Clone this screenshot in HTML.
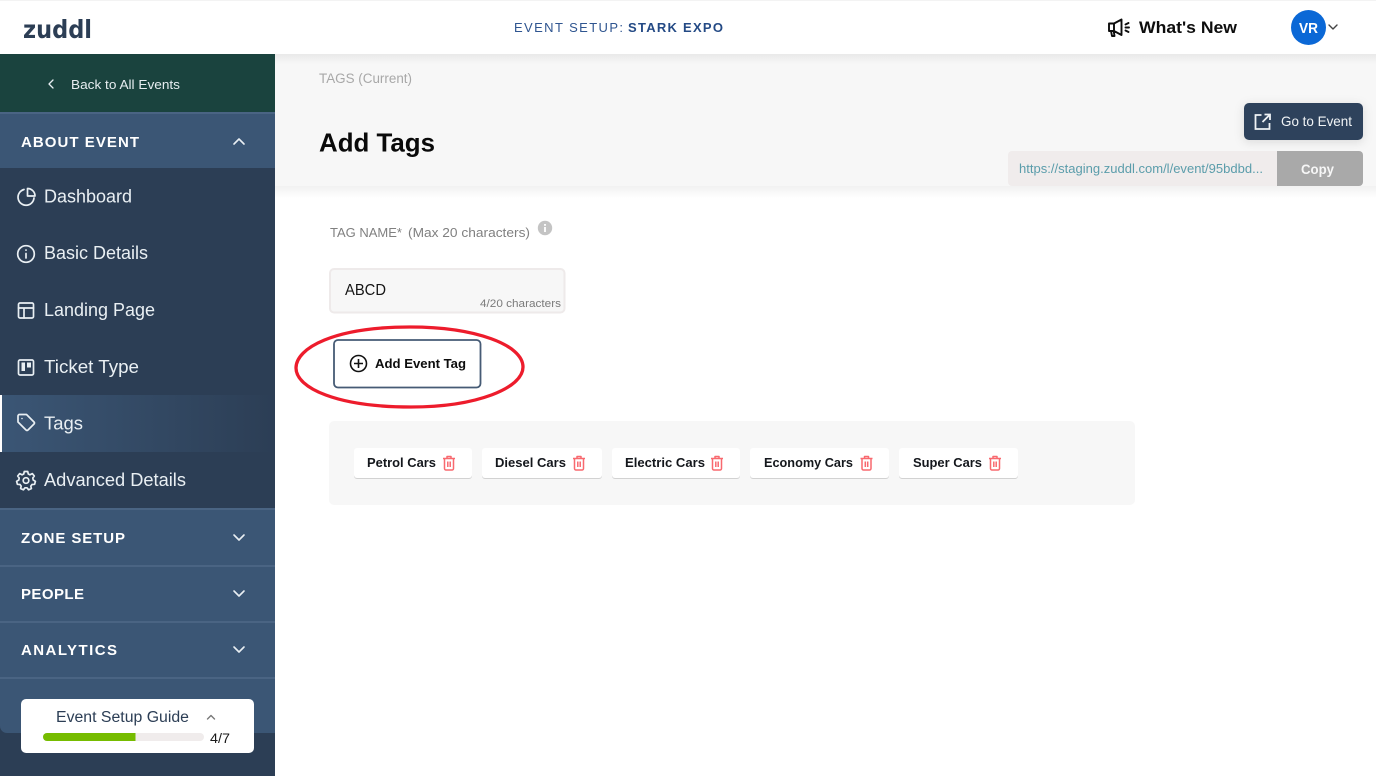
<!DOCTYPE html>
<html lang="en">
<head>
<meta charset="utf-8">
<title>Add Tags</title>
<style>
html,body{margin:0;padding:0;background:#fff;width:1376px;height:776px;overflow:hidden}
svg{display:block}
text{font-family:"Liberation Sans",sans-serif;white-space:pre}
.b{font-weight:bold}
.side{fill:#e9eff3;font-size:18px}
.sec{fill:#fff;font-weight:bold;font-size:15px}
.chip{fill:#14171c;font-weight:bold;font-size:12.5px}
.ico{fill:none;stroke:#e9eff3;stroke-width:1.7;stroke-linecap:round;stroke-linejoin:round}
.chev{fill:none;stroke:#e9eff3;stroke-width:1.6;stroke-linecap:round;stroke-linejoin:round}
.tr{fill:none;stroke:#f8696f;stroke-width:1.5;stroke-linejoin:round}
</style>
</head>
<body>
<svg width="1376" height="776" viewBox="0 0 1376 776" xmlns="http://www.w3.org/2000/svg">
<defs>
<linearGradient id="act" x1="0" x2="1" y1="0" y2="0"><stop offset="0" stop-color="#3b5675"/><stop offset="1" stop-color="#2c3e55"/></linearGradient>
<linearGradient id="sh" x1="0" x2="0" y1="0" y2="1"><stop offset="0" stop-color="#e9e9e9"/><stop offset="1" stop-color="#f7f7f7"/></linearGradient>
<linearGradient id="sh2" x1="0" x2="0" y1="0" y2="1"><stop offset="0" stop-color="#f1f1f1"/><stop offset="1" stop-color="#ffffff"/></linearGradient>
<filter id="btnsh" x="-20%" y="-40%" width="140%" height="180%"><feDropShadow dx="0" dy="2" stdDeviation="5" flood-color="#000" flood-opacity=".12"/></filter>
</defs>

<!-- content header -->
<rect x="275" y="54" width="1101" height="132" fill="#f7f7f7"/>
<rect x="275" y="54" width="1101" height="10" fill="url(#sh)"/>
<rect x="275" y="186" width="1101" height="12" fill="url(#sh2)"/>

<!-- top bar -->
<rect x="0" y="0" width="1376" height="54" fill="#fff"/>
<rect x="0" y="0" width="1376" height="1" fill="#f3f3f3"/>
<text x="23" y="38" font-size="25" fill="#2c3e55" textLength="69" lengthAdjust="spacingAndGlyphs" style="font-family:'DejaVu Sans',sans-serif;font-weight:bold">zuddl</text>
<text x="514" y="32" font-size="13" fill="#2f5590" textLength="109" lengthAdjust="spacing">EVENT SETUP:</text>
<text x="628" y="32" class="b" font-size="13" fill="#244a85" textLength="95" lengthAdjust="spacing">STARK EXPO</text>
<g fill="none" stroke="#0d0d0d" stroke-width="1.9" stroke-linejoin="round" stroke-linecap="round">
<path d="M1109 23.500h5v7.500h-5zM1114 23.500l7.500-4v15.500l-7.500-4M1111 31l1 5h2.500l-.8-5"/>
<path d="M1125.500 24.500l3-1.500M1125.500 27.500h3.500M1125.500 30.500l3 1.500"/>
</g>
<text x="1139" y="33" class="b" font-size="17" fill="#0d0d0d" textLength="98" lengthAdjust="spacingAndGlyphs">What's New</text>
<circle cx="1308.500" cy="27.500" r="17.500" fill="#0b68d6"/>
<text x="1299" y="33" class="b" font-size="15" fill="#fff" textLength="19" lengthAdjust="spacingAndGlyphs">VR</text>
<path d="M1329 25l4 4 4-4" fill="none" stroke="#444" stroke-width="1.400" stroke-linecap="round" stroke-linejoin="round"/>

<!-- sidebar -->
<rect x="0" y="54" width="275" height="722" fill="#2c3e55"/>
<rect x="0" y="54" width="275" height="58" fill="#1a433e"/>
<path d="M53 80l-4 4 4 4" class="chev" style="stroke-width:1.300"/>
<text x="71" y="89" font-size="13" fill="#e6edf0" textLength="109" lengthAdjust="spacingAndGlyphs">Back to All Events</text>

<rect x="0" y="112" width="275" height="56" fill="#3b5675"/>
<rect x="0" y="112" width="275" height="2" fill="#4a6483"/>
<text x="21" y="147" class="sec" textLength="118" lengthAdjust="spacing">ABOUT EVENT</text>
<path d="M234 144l5-5 5 5" class="chev"/>

<rect x="0" y="395" width="275" height="57" fill="url(#act)"/>
<rect x="0" y="395" width="2" height="57" fill="#fff"/>

<!-- dashboard icon -->
<path class="ico" d="M24 189.500a8 8 0 1 0 10 8.500"/>
<path class="ico" d="M27.500 188.500a7.500 7.500 0 0 1 7.500 7.500h-7.500z"/>
<text x="44" y="202.500" class="side" textLength="88" lengthAdjust="spacingAndGlyphs">Dashboard</text>
<!-- info icon -->
<circle class="ico" cx="26" cy="254" r="8.300"/>
<path class="ico" d="M26 253.500v4.500M26 250v.2"/>
<text x="44" y="259" class="side" textLength="104" lengthAdjust="spacingAndGlyphs">Basic Details</text>
<!-- layout icon -->
<rect class="ico" x="18.500" y="303" width="15" height="15" rx="1.500"/>
<path class="ico" d="M18.500 308h15M24 308v10"/>
<text x="44" y="316" class="side" textLength="111" lengthAdjust="spacingAndGlyphs">Landing Page</text>
<!-- trello icon -->
<rect class="ico" x="18.500" y="360" width="15" height="15" rx="1.500"/>
<path d="M21.500 362.500h3.500v8.500h-3.500zM27 362.500h4v5h-4z" fill="#e9eff3"/>
<text x="44" y="373" class="side" textLength="95" lengthAdjust="spacingAndGlyphs">Ticket Type</text>
<!-- tag icon -->
<path class="ico" d="M18 416v6l8 8a1.500 1.500 0 0 0 2 0l6-6a1.500 1.500 0 0 0 0-2l-7.500-7.500h-7a1.500 1.500 0 0 0-1.500 1.500z"/>
<circle cx="22" cy="418.500" r=".8" fill="#e9eff3"/>
<text x="44" y="429.500" class="side" textLength="39" lengthAdjust="spacingAndGlyphs">Tags</text>
<!-- gear icon -->
<circle class="ico" cx="26" cy="480.500" r="2.800"/>
<path class="ico" d="M24.300 471.500h3.400l.6 2.500 1.700.8 2.300-1.200 2 2.400-1.500 2 .4 2 2.200 1.300-.8 3-2.600.2-1.200 1.600.6 2.500-2.900 1.200-1.500-2h-2l-1.500 2-2.900-1.200.6-2.500-1.200-1.600-2.600-.2-.8-3 2.200-1.300.4-2-1.500-2 2-2.400 2.300 1.200 1.700-.8z"/>
<text x="44" y="486" class="side" textLength="142" lengthAdjust="spacingAndGlyphs">Advanced Details</text>

<!-- collapsed sections -->
<path d="M0 510h275v223h-268a7 7 0 0 1-7-7z" fill="#3b5675"/>
<rect x="0" y="508" width="275" height="2" fill="#4a6483"/>
<rect x="0" y="565" width="275" height="2" fill="#4a6483"/>
<rect x="0" y="621" width="275" height="2" fill="#4a6483"/>
<rect x="0" y="677" width="275" height="2" fill="#4a6483"/>
<text x="21" y="543" class="sec" textLength="104" lengthAdjust="spacing">ZONE SETUP</text>
<path d="M234 535l5 5 5-5" class="chev"/>
<text x="21" y="599" class="sec" textLength="63" lengthAdjust="spacing">PEOPLE</text>
<path d="M234 591l5 5 5-5" class="chev"/>
<text x="21" y="655" class="sec" textLength="96" lengthAdjust="spacing">ANALYTICS</text>
<path d="M234 647l5 5 5-5" class="chev"/>

<!-- guide card -->
<rect x="21" y="699" width="233" height="54" rx="5" fill="#fff"/>
<text x="56" y="722" font-size="15.500" fill="#2c3e55" textLength="133" lengthAdjust="spacingAndGlyphs">Event Setup Guide</text>
<path d="M207.500 719l3.500-3.500 3.500 3.500" fill="none" stroke="#777" stroke-width="1.400" stroke-linecap="round" stroke-linejoin="round"/>
<rect x="43" y="733" width="161" height="8" rx="4" fill="#f0ecec"/>
<path d="M47 733h88.500v8h-88.500a4 4 0 0 1 0-8z" fill="#76bc00"/>
<text x="210" y="743" font-size="13.500" fill="#1a1a1a" textLength="20" lengthAdjust="spacingAndGlyphs">4/7</text>

<!-- page header text -->
<text x="319" y="83" font-size="13.500" fill="#a8a8a8" textLength="93" lengthAdjust="spacingAndGlyphs">TAGS (Current)</text>
<text x="319" y="151.500" class="b" font-size="26" fill="#0a0a0a" textLength="116" lengthAdjust="spacingAndGlyphs">Add Tags</text>

<rect x="1244" y="103" width="119" height="37" rx="5" fill="#2f435c" filter="url(#btnsh)"/>
<path d="M1261.500 115h-6v14h14v-6M1262.500 122l6.500-6.500M1264.500 114.500h5.500v5.500" fill="none" stroke="#eef2f5" stroke-width="1.800"/>
<text x="1281" y="126" font-size="14" fill="#f1f4f6" textLength="71" lengthAdjust="spacingAndGlyphs">Go to Event</text>

<path d="M1012 151h265v35h-265a4 4 0 0 1-4-4v-27a4 4 0 0 1 4-4z" fill="#f0ecec"/>
<text x="1019" y="173" font-size="12.500" fill="#5b9dab" textLength="244" lengthAdjust="spacingAndGlyphs">https://staging.zuddl.com/l/event/95bdbd...</text>
<path d="M1277 151h82a4 4 0 0 1 4 4v27a4 4 0 0 1-4 4h-82z" fill="#a9a9a9"/>
<text x="1301" y="174" class="b" font-size="13.500" fill="#f7f7f7" textLength="33" lengthAdjust="spacingAndGlyphs">Copy</text>

<!-- form -->
<text x="330" y="237" font-size="13" fill="#808080" textLength="72" lengthAdjust="spacingAndGlyphs">TAG NAME*</text>
<text x="408" y="237" font-size="13" fill="#808080" textLength="122" lengthAdjust="spacingAndGlyphs">(Max 20 characters)</text>
<circle cx="545" cy="228" r="7.200" fill="#c4c4c4"/>
<rect x="544.100" y="227" width="1.800" height="5" fill="#fff"/>
<rect x="544.100" y="224" width="1.800" height="1.800" fill="#fff"/>

<rect x="330" y="269" width="234.500" height="43.500" rx="4" fill="#f7f7f7" stroke="#eeeaea" stroke-width="2"/>
<text x="345" y="295" font-size="15.500" fill="#141414" textLength="41" lengthAdjust="spacingAndGlyphs">ABCD</text>
<text x="480" y="307" font-size="11" fill="#7a7a7a" textLength="81" lengthAdjust="spacingAndGlyphs">4/20 characters</text>

<rect x="334" y="340" width="146.500" height="47.500" rx="4" fill="#fff" stroke="#465b75" stroke-width="1.800"/>
<circle cx="358.500" cy="363.500" r="8" fill="none" stroke="#111" stroke-width="1.600"/>
<path d="M358.500 359v9M354 363.500h9" stroke="#111" stroke-width="1.600" fill="none"/>
<text x="375" y="368" class="b" font-size="13" fill="#0d0d0d" textLength="91" lengthAdjust="spacingAndGlyphs">Add Event Tag</text>

<path d="M296 368c0-20 38-41 114-41 66 0 113 18 113 40 0 21-46 40-112 40-74 0-115-19-115-39z" fill="none" stroke="#ed1c2c" stroke-width="3.300"/>

<!-- tag list -->
<rect x="329" y="421" width="806" height="84" rx="5" fill="#f7f7f7"/>

<rect x="354" y="449" width="118" height="30" rx="3" fill="#d2d2d2"/>
<rect x="354" y="448" width="118" height="30" rx="3" fill="#fff"/>
<text x="367" y="467" class="chip" textLength="69" lengthAdjust="spacingAndGlyphs">Petrol Cars</text>
<g class="tr" transform="translate(443,456)"><path d="M0 2.500h12M4 2.500v-2h4v2M1.500 2.500v10a1.500 1.500 0 0 0 1.500 1.500h6a1.500 1.500 0 0 0 1.500-1.500v-10M4.800 5.500v5.500M7.200 5.500v5.500"/></g>

<rect x="482" y="449" width="120" height="30" rx="3" fill="#d2d2d2"/>
<rect x="482" y="448" width="120" height="30" rx="3" fill="#fff"/>
<text x="495" y="467" class="chip" textLength="71" lengthAdjust="spacingAndGlyphs">Diesel Cars</text>
<g class="tr" transform="translate(573,456)"><path d="M0 2.500h12M4 2.500v-2h4v2M1.500 2.500v10a1.500 1.500 0 0 0 1.500 1.500h6a1.500 1.500 0 0 0 1.500-1.500v-10M4.800 5.500v5.500M7.200 5.500v5.500"/></g>

<rect x="612" y="449" width="128" height="30" rx="3" fill="#d2d2d2"/>
<rect x="612" y="448" width="128" height="30" rx="3" fill="#fff"/>
<text x="625" y="467" class="chip" textLength="80" lengthAdjust="spacingAndGlyphs">Electric Cars</text>
<g class="tr" transform="translate(711,456)"><path d="M0 2.500h12M4 2.500v-2h4v2M1.500 2.500v10a1.500 1.500 0 0 0 1.500 1.500h6a1.500 1.500 0 0 0 1.500-1.500v-10M4.800 5.500v5.500M7.200 5.500v5.500"/></g>

<rect x="750" y="449" width="139" height="30" rx="3" fill="#d2d2d2"/>
<rect x="750" y="448" width="139" height="30" rx="3" fill="#fff"/>
<text x="764" y="467" class="chip" textLength="89" lengthAdjust="spacingAndGlyphs">Economy Cars</text>
<g class="tr" transform="translate(860.500,456)"><path d="M0 2.500h12M4 2.500v-2h4v2M1.500 2.500v10a1.500 1.500 0 0 0 1.500 1.500h6a1.500 1.500 0 0 0 1.500-1.500v-10M4.800 5.500v5.500M7.200 5.500v5.500"/></g>

<rect x="899" y="449" width="119" height="30" rx="3" fill="#d2d2d2"/>
<rect x="899" y="448" width="119" height="30" rx="3" fill="#fff"/>
<text x="913" y="467" class="chip" textLength="69" lengthAdjust="spacingAndGlyphs">Super Cars</text>
<g class="tr" transform="translate(989,456)"><path d="M0 2.500h12M4 2.500v-2h4v2M1.500 2.500v10a1.500 1.500 0 0 0 1.500 1.500h6a1.500 1.500 0 0 0 1.500-1.500v-10M4.800 5.500v5.500M7.200 5.500v5.500"/></g>
</svg>
</body>
</html>
